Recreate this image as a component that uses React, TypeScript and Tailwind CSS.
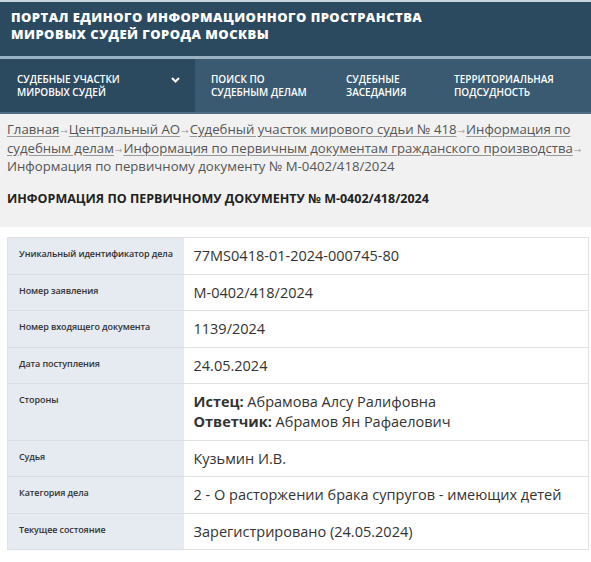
import React from "react";

type Row = {
  label: string;
  value: React.ReactNode;
};

const crumbs = [
  "Главная",
  "Центральный АО",
  "Судебный участок мирового судьи № 418",
  "Информация по судебным делам",
  "Информация по первичным документам гражданского производства",
];

const rows: Row[] = [
  { label: "Уникальный идентификатор дела", value: "77MS0418-01-2024-000745-80" },
  { label: "Номер заявления", value: "М-0402/418/2024" },
  { label: "Номер входящего документа", value: "1139/2024" },
  { label: "Дата поступления", value: "24.05.2024" },
  {
    label: "Стороны",
    value: (
      <>
        <div>
          <span className="font-bold">Истец:</span> Абрамова Алсу Ралифовна
        </div>
        <div>
          <span className="font-bold">Ответчик:</span> Абрамов Ян Рафаелович
        </div>
      </>
    ),
  },
  { label: "Судья", value: "Кузьмин И.В." },
  { label: "Категория дела", value: "2 - О расторжении брака супругов - имеющих детей" },
  { label: "Текущее состояние", value: "Зарегистрировано (24.05.2024)" },
];

function Chevron() {
  return (
    <svg width="9" height="6" viewBox="0 0 9 6">
      <path d="M1 1 L4.5 4.5 L8 1" fill="none" stroke="white" strokeWidth="2" />
    </svg>
  );
}

export default function App() {
  return (
    <div className="w-[591px] h-[562px] overflow-hidden bg-white font-['Open_Sans',sans-serif]">
      {/* Portal header */}
      <header className="border-t-2 border-[#c9d5de] bg-[#2c4a5f] h-[56px] pl-[11px] pt-[7px]">
        <h1 className="text-white text-[13px] leading-[17px] font-extrabold uppercase tracking-[0.45px]">
          Портал единого информационного пространства
          <br />
          мировых судей города Москвы
        </h1>
      </header>

      {/* Main navigation */}
      <nav className="border-t-[3px] border-[#98b2c4] flex h-[58px] border-b-2 border-b-[#4f6e85] text-white text-[10px] leading-[13.5px] font-semibold uppercase">
        <div className="w-[195px] bg-[#2c4a5f] pl-[17px] pr-[15px] pt-[1px] flex items-center justify-between">
          <span>
            Судебные участки
            <br />
            мировых судей
          </span>
          <span className="self-start mt-[17px]">
            <Chevron />
          </span>
        </div>
        <div className="flex-1 bg-[#3a5a71] pt-[1px] flex items-center">
          <span className="pl-[16px] w-[151px]">
            Поиск по
            <br />
            судебным делам
          </span>
          <span className="w-[108px]">
            Судебные
            <br />
            заседания
          </span>
          <span>
            Территориальная
            <br />
            подсудность
          </span>
        </div>
      </nav>

      {/* Breadcrumbs and title */}
      <section className="bg-[#f1f1f1] px-[7px] pt-[6px] h-[113px]">
        <p className="text-[13.2px] leading-[18.5px] text-[#555]">
          {crumbs.map((c) => (
            <React.Fragment key={c}>
              <a href="#" className="underline decoration-[#999] underline-offset-2">
                {c}
              </a>
              <span className="text-[#aaa] text-[9px] leading-none mx-[1px] font-['DejaVu_Sans',sans-serif]">→</span>
              <wbr />
            </React.Fragment>
          ))}
          Информация по первичному документу № М-0402/418/2024
        </p>
        <h2 className="mt-[14px] text-[12.5px] leading-[17px] font-bold text-[#222] uppercase">
          Информация по первичному документу № М-0402/418/2024
        </h2>
      </section>

      {/* Document details */}
      <div className="pt-[10px] pl-[7px] pr-[2px]">
        <table className="w-full table-fixed border-collapse border border-[#e2e2e2]">
          <colgroup>
            <col className="w-[176px]" />
            <col />
          </colgroup>
          <tbody>
            {rows.map((r) => (
              <tr key={r.label} className="border-b border-[#e2e2e2]">
                <td className="bg-[#e5ebf1] align-top pl-[11px] pr-1 pt-[9px] pb-2 text-[9px] tracking-[-0.1px] leading-[14px] font-semibold text-[#333] border-b border-[#d8dfe6] whitespace-nowrap">
                  {r.label}
                </td>
                <td className="bg-white align-top pl-[10px] pr-2 pt-[8px] pb-[7.5px] text-[14.5px] leading-[20px] text-[#333]">
                  {r.value}
                </td>
              </tr>
            ))}
          </tbody>
        </table>
      </div>
    </div>
  );
}
